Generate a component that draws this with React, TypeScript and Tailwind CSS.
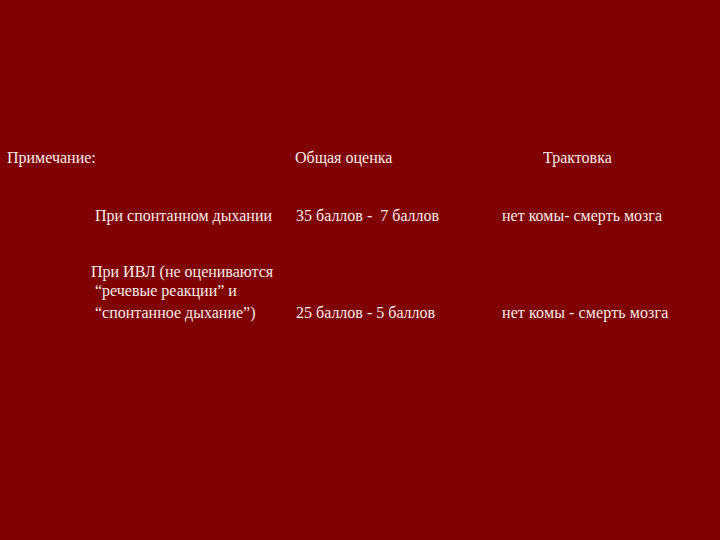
export default function App() {
  return (
    <div className="w-[720px] h-[540px] bg-[#800000] text-[#f4ecec] text-[16px] leading-[20px] overflow-hidden" style={{ fontFamily: '"Liberation Serif", "Times New Roman", serif' }}>
      <div className="pt-[148px] pl-[7px] flex flex-col">
        <div className="flex">
          <div className="w-[288px]">Примечание:</div>
          <div className="w-[207px]">Общая оценка</div>
          <div className="pl-[41px]">Трактовка</div>
        </div>
        <div className="flex mt-[38px]">
          <div className="w-[288px] pl-[88px]">При спонтанном дыхании</div>
          <div className="w-[207px] pl-[1px]">35 баллов -&nbsp; 7 баллов</div>
          <div>нет комы- смерть мозга</div>
        </div>
        <div className="flex mt-[36px] items-end">
          <div className="w-[288px] pl-[84px] whitespace-pre flex flex-col">
            <div>При ИВЛ (не оцениваются</div>
            <div className="-mt-[1px]">{" “речевые реакции” и"}</div>
            <div className="mt-[2px]">{" “спонтанное дыхание”)"}</div>
          </div>
          <div className="w-[207px] pl-[1px]">25 баллов - 5 баллов</div>
          <div className="tracking-[0.1px]">нет комы - смерть мозга</div>
        </div>
      </div>
    </div>
  );
}
